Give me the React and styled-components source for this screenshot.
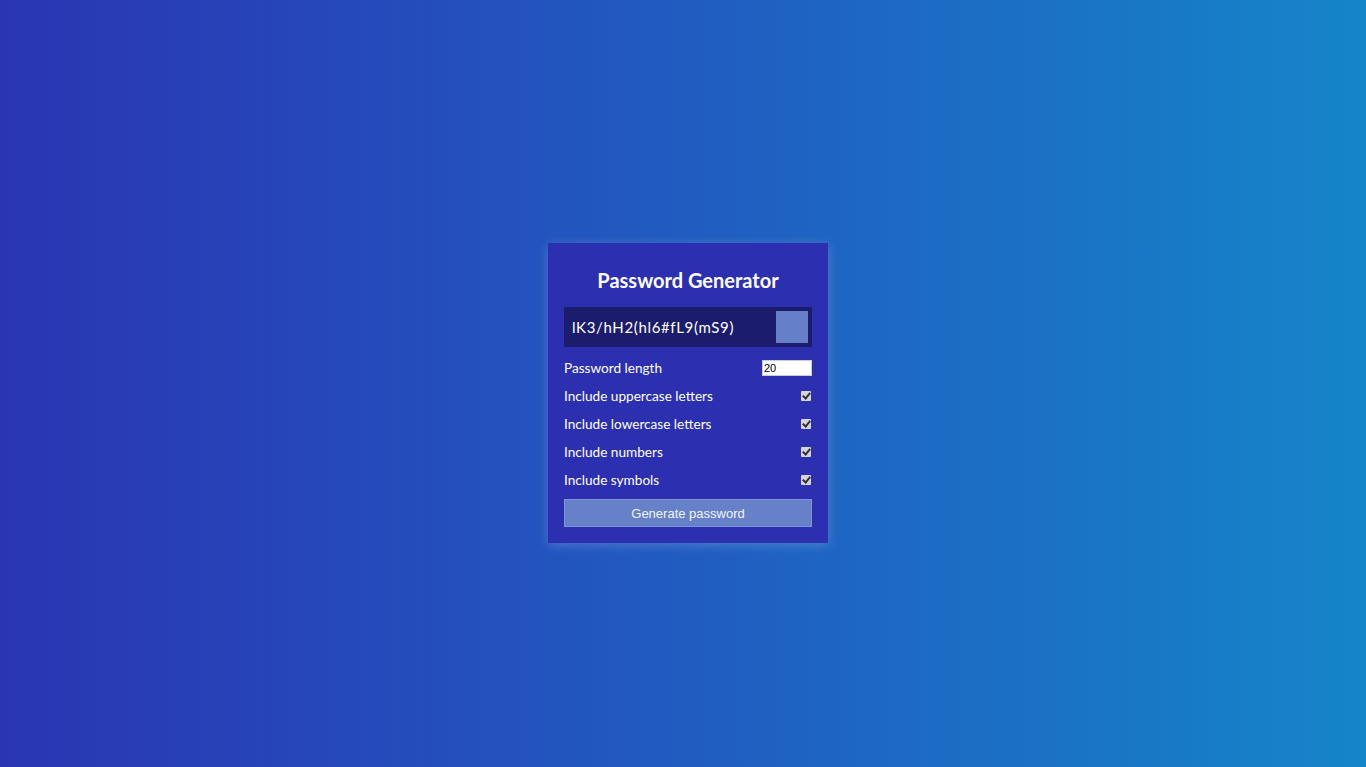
import { useState } from 'react'
import styled, { createGlobalStyle } from 'styled-components'

const GlobalStyle = createGlobalStyle`
  * { box-sizing: border-box; }
  body {
    margin: 0;
    font-family: 'Lato', 'Open Sans', sans-serif;
  }
`

const Page = styled.div`
  min-height: 100vh;
  padding: 19px 0 0 10px;
  background: linear-gradient(90deg, #2a35b3 0%, #2258c0 45%, #1585c9 100%);
  display: flex;
  align-items: center;
  justify-content: center;
  color: #fff;
`

const Card = styled.div`
  width: 280px;
  background-color: #2c30b0;
  padding: 16px;
  box-shadow: 0 2px 10px rgba(255, 255, 255, 0.2);
`

const Title = styled.h2`
  margin: 1px 0 7px;
  text-align: center;
  font-size: 20px;
  font-weight: 700;
  line-height: 40px;
`

const Result = styled.div`
  height: 40px;
  background-color: #1b1c6b;
  display: flex;
  align-items: center;
  justify-content: space-between;
  padding: 0 4px 0 8px;
  font-size: 15px;
  letter-spacing: 0.65px;
  margin-bottom: 7px;
`

const ClipButton = styled.button`
  width: 32px;
  height: 32px;
  border: none;
  background-color: #6580c8;
  cursor: pointer;
`

const Setting = styled.label`
  display: flex;
  align-items: center;
  justify-content: space-between;
  height: 28px;
  font-size: 13.6px;
`

const NumberInput = styled.input`
  width: 50px;
  height: 16px;
  border: 1px solid #ccc;
  padding: 0 1px;
  font-family: 'Liberation Sans', Arial, sans-serif;
  font-size: 11px;
  color: #000;
  margin: 0;
`

const Check = styled.input`
  width: 10px;
  height: 10px;
  margin: 0 1px 0 0;
  appearance: none;
  background: #d4d4da;
  border-radius: 1px;
  position: relative;
  &:checked::after {
    content: '';
    position: absolute;
    left: 3px;
    top: 0px;
    width: 3px;
    height: 6px;
    border: solid #333;
    border-width: 0 2px 2px 0;
    transform: rotate(40deg);
  }
`

const Generate = styled.button`
  width: 100%;
  height: 28px;
  margin-top: 5px;
  border: 1px solid #7a95d8;
  background-color: #6681c8;
  color: #f2f4fb;
  font-family: 'Liberation Sans', Arial, sans-serif;
  font-size: 13px;
  cursor: pointer;
`

const options = [
  'Include uppercase letters',
  'Include lowercase letters',
  'Include numbers',
  'Include symbols',
]

export default function App() {
  const [length, setLength] = useState(20)
  const [checks, setChecks] = useState([true, true, true, true])

  return (
    <Page>
      <GlobalStyle />
      <Card>
        <Title>Password Generator</Title>
        <Result>
          <span>lK3/hH2(hl6#fL9(mS9)</span>
          <ClipButton aria-label="Copy" />
        </Result>
        <Setting>
          Password length
          <NumberInput
            type="text"
            value={length}
            onChange={(e) => setLength(e.target.value)}
          />
        </Setting>
        {options.map((label, i) => (
          <Setting key={label}>
            {label}
            <Check
              type="checkbox"
              checked={checks[i]}
              onChange={() =>
                setChecks(checks.map((c, j) => (j === i ? !c : c)))
              }
            />
          </Setting>
        ))}
        <Generate>Generate password</Generate>
      </Card>
    </Page>
  )
}
